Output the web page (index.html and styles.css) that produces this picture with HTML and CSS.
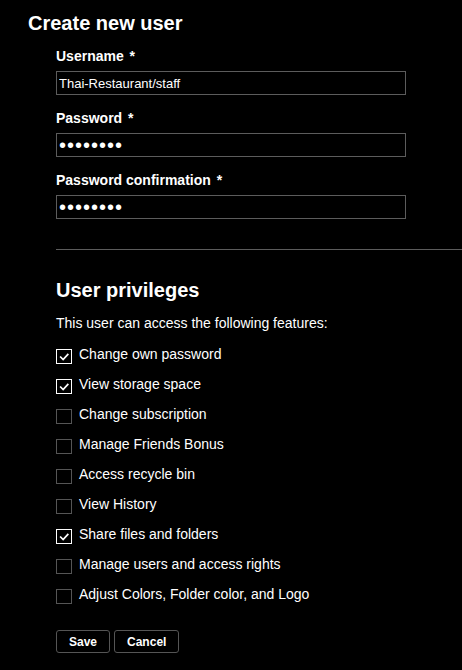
FILE: index.html
```html
<!DOCTYPE html>
<html lang="en">
<head>
    <meta charset="UTF-8">
    <meta name="viewport" content="width=device-width, initial-scale=1.0">
    <title>Create new user</title>
    <link rel="stylesheet" href="styles.css">
</head>
<body>

<div class="page">
    <h1>Create new user</h1>

    <form class="user-form" onsubmit="return false;">
        <div class="field">
            <label for="username">Username <span class="req">*</span></label>
            <input type="text" id="username" value="Thai-Restaurant/staff">
        </div>
        <div class="field">
            <label for="password">Password <span class="req">*</span></label>
            <input type="password" id="password" class="secret" value="password">
        </div>
        <div class="field">
            <label for="confirm">Password confirmation <span class="req">*</span></label>
            <input type="password" id="confirm" class="secret" value="password">
        </div>

        <hr class="divider">

        <h2>User privileges</h2>
        <p class="intro">This user can access the following features:</p>

        <ul class="priv-list">
            <li class="priv"><span class="box checked"><svg viewBox="0 0 15 15"><path d="M3 7.5 L6.5 11 L12.5 4.5"/></svg></span>Change own password</li>
            <li class="priv"><span class="box checked"><svg viewBox="0 0 15 15"><path d="M3 7.5 L6.5 11 L12.5 4.5"/></svg></span>View storage space</li>
            <li class="priv"><span class="box"></span>Change subscription</li>
            <li class="priv"><span class="box"></span>Manage Friends Bonus</li>
            <li class="priv"><span class="box"></span>Access recycle bin</li>
            <li class="priv"><span class="box"></span>View History</li>
            <li class="priv"><span class="box checked"><svg viewBox="0 0 15 15"><path d="M3 7.5 L6.5 11 L12.5 4.5"/></svg></span>Share files and folders</li>
            <li class="priv"><span class="box"></span>Manage users and access rights</li>
            <li class="priv"><span class="box"></span>Adjust Colors, Folder color, and Logo</li>
        </ul>

        <div class="actions">
            <button type="submit">Save</button>
            <button type="button">Cancel</button>
        </div>
    </form>
</div>

</body>
</html>
```

FILE: styles.css
```css
body {
    margin: 0;
    background: #000;
    color: #fff;
    font-family: 'Liberation Sans', Arial, sans-serif;
    font-size: 14px;
    line-height: 16px;
}
.page {
    padding: 12px 0 0 28px;
}
h1, h2 {
    margin: 0;
    font-size: 20px;
    line-height: 23px;
    font-weight: bold;
}
.user-form {
    padding-left: 28px;
    padding-top: 13px;
}
.field {
    margin-bottom: 15px;
}
.field label {
    display: block;
    font-weight: bold;
    margin-bottom: 7px;
}
.req {
    margin-left: 2px;
}
.field input {
    display: block;
    box-sizing: border-box;
    width: 350px;
    height: 24px;
    margin: 0;
    padding: 0 2px;
    background: #000;
    color: #fff;
    border: 1px solid #5c5c5c;
    border-radius: 0;
    font-family: 'Liberation Sans', Arial, sans-serif;
    font-size: 13px;
    outline: none;
}
.field input.secret {
    font-size: 20px;
    letter-spacing: 1px;
}
.divider {
    border: none;
    border-top: 1px solid #5c5c5c;
    margin: 30px 0 29px 0;
    height: 0;
}
.intro {
    margin: 13px 0 0 0;
}
.priv-list {
    list-style: none;
    margin: 15px 0 0 0;
    padding: 0;
}
.priv {
    display: flex;
    align-items: flex-start;
    height: 16px;
    margin-bottom: 14px;
}
.priv:last-child {
    margin-bottom: 0;
}
.box {
    box-sizing: border-box;
    width: 16px;
    height: 15px;
    margin: 3px 7px 0 0;
    border: 1px solid #555;
    flex: none;
}
.box.checked {
    border-color: #fff;
}
.box svg {
    display: block;
    width: 14px;
    height: 13px;
    fill: none;
    stroke: #fff;
    stroke-width: 2;
}
.actions {
    display: flex;
    gap: 4px;
    margin-top: 28px;
}
.actions button {
    height: 23px;
    padding: 0 12px;
    background: #000;
    color: #fff;
    border: 1px solid #555;
    border-radius: 3px;
    font-family: 'Liberation Sans', Arial, sans-serif;
    font-size: 12px;
    font-weight: bold;
    cursor: pointer;
}
```
